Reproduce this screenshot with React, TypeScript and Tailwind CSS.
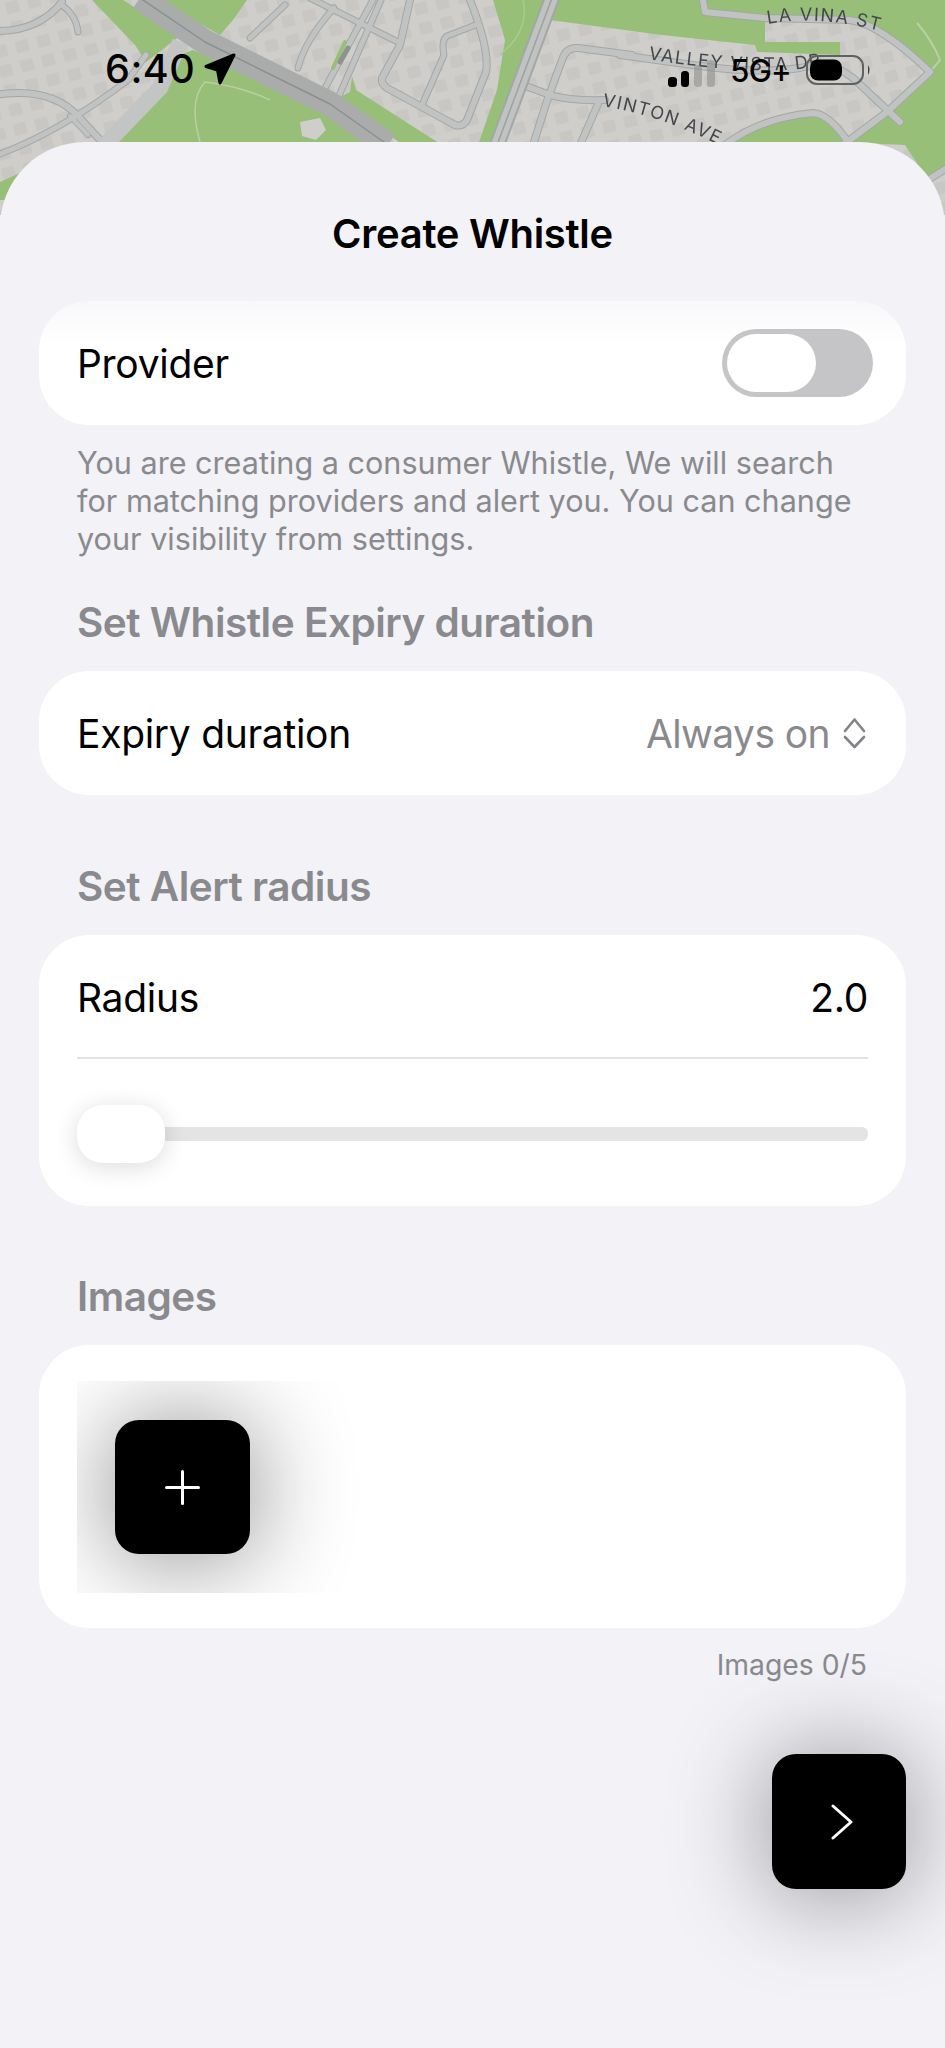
import React from "react";

const RES = "#cfcecb";
const GREEN = "#97bf77";

const streets: [string, number][] = [
  ["M-5 31 Q38 32 62 2", 6],
  ["M60 4 Q76 14 78 32", 5],
  ["M-5 95 Q50 86 78 116 L102 142", 6],
  ["M-5 156 Q60 132 128 80 L146 55", 5],
  ["M70 116 L88 135", 4],
  ["M250 38 L285 5", 5],
  ["M298 68 Q305 40 334 8", 5],
  ["M310 -2 L398 42", 5],
  ["M373 0 L325 88", 5],
  ["M381 0 L338 98", 5],
  ["M410 0 L400 45 L382 78 Q381 84 387 88 L455 125 Q463 127 467 120 L486 72 Q490 50 470 0", 6],
  ["M478 24 L447 36 Q441 40 444 55 L422 105", 5],
  ["M523 85 L550 95 Q570 101 605 100", 6],
  ["M632 55 L578 48 Q566 47 562 60 L548 98 L533 145", 6],
  ["M598 104 L580 145", 6],
  ["M620 55 L700 66 Q760 74 800 68 Q830 60 853 78 L900 122", 6],
  ["M703 0 L705 12 L765 18 L850 20 Q880 24 930 72 L887 112 L843 145", 6],
  ["M725 145 Q760 118 813 113 Q830 114 850 145", 6],
  ["M928 180 L950 166", 6],
];

function MapBackground() {
  return (
    <svg
      className="absolute left-0 top-0 blur-[0.7px]"
      width="945"
      height="215"
      viewBox="0 0 945 215"
    >
      <defs>
        <pattern id="lots" width="22" height="20" patternUnits="userSpaceOnUse" patternTransform="rotate(-14)">
          <rect x="4" y="4" width="13" height="12" rx="1.5" fill="#c8c7c4" />
        </pattern>
        <path id="lavina" d="M768 24 Q820 14 888 33" />
        <path id="valley" d="M648 59 Q720 72 790 70 Q815 68 838 62" />
        <path id="vinton" d="M602 106 Q665 116 728 150" />
      </defs>
      <rect width="945" height="215" fill={RES} />
      <rect width="945" height="215" fill="url(#lots)" />
      <g fill={GREEN}>
        <path d="M92 0 L123 0 L180 36 L146 62 L135 45 Z" />
        <path d="M157 0 L247 0 L233 20 L220 35 Z" />
        <path d="M193 50 L330 115 L372 145 L105 145 L160 95 L180 55 Z" />
        <path d="M338 98 L350 92 L352 76 L356 90 L442 145 L403 145 Z" />
        <path d="M493 0 L505 40 L497 90 L478 145 L500 145 L556 0 Z" />
        <path d="M555 0 L945 0 L945 168 L928 180 L905 145 L843 142 L887 112 L930 72 Q885 28 850 20 L765 20 L765 42 L840 42 L840 55 L757 52 L755 45 L662 35 L550 20 Z" />
        <path d="M728 145 Q765 118 813 113 Q832 116 848 145 Z" />
        <path d="M0 182 L22 172 L8 200 L0 200 Z" />
      </g>
      <path d="M917 23 Q932 40 940 60 L930 72" fill="none" stroke="#b9cfa5" strokeWidth="2" />
      <path d="M200 142 Q188 100 205 82 Q240 86 270 100" fill="none" stroke="#b9cfa5" strokeWidth="1.5" />
      <path d="M553 0 Q560 30 530 55" fill="none" stroke="#a9cb8e" strokeWidth="1.5" transform="translate(-30 0)" />
      <path d="M300 122 L320 118 L326 130 L316 140 L302 136 Z" fill={RES} />
      <g fill="none" strokeLinejoin="round" strokeLinecap="round">
        {streets.map(([d, w], i) => (
          <path key={`o${i}`} d={d} stroke="#a3a7a6" strokeWidth={w + 2} />
        ))}
        {streets.map(([d, w], i) => (
          <path key={`i${i}`} d={d} stroke="#c0c3c2" strokeWidth={w} />
        ))}
        <path d="M180 42 L160 88 L105 145" stroke="#c2c5c4" strokeWidth="16" strokeLinecap="butt" />
        <path d="M552 -2 L497 145" stroke="#a3a7a6" strokeWidth="16" strokeLinecap="butt" />
        <path d="M552 -2 L497 145" stroke="#c0c3c2" strokeWidth="12" strokeLinecap="butt" />
        <path d="M552 -2 L497 145" stroke="#9da1a0" strokeWidth="1.5" strokeLinecap="butt" />
        <path d="M140 -2 L205 42 L330 104 L388 145" stroke="#a9acab" strokeWidth="25" strokeLinecap="butt" />
        <path d="M140 -2 L205 42 L330 104 L388 145" stroke="#8b8f8f" strokeWidth="1.5" strokeLinecap="butt" />
        <path d="M333 68 L345 42" stroke={GREEN} strokeWidth="4" />
        <path d="M340 62 L348 48" stroke="#8f9291" strokeWidth="5" />
      </g>
      <g
        fill="#43474b"
        fontFamily="Inter, sans-serif"
        fontSize="18"
        style={{ letterSpacing: "1.5px" }}
      >
        <text>
          <textPath href="#lavina">LA VINA ST</textPath>
        </text>
        <text>
          <textPath href="#valley">VALLEY VISTA DR</textPath>
        </text>
        <text>
          <textPath href="#vinton">VINTON AVE</textPath>
        </text>
      </g>
    </svg>
  );
}

function StatusBar() {
  return (
    <div className="absolute left-0 top-[50px] flex h-10 w-full items-center justify-between pl-[105px] pr-[73px] font-[Inter,sans-serif] text-black">
      <div className="flex items-center gap-[8px]">
        <span className="text-[39.5px] font-medium leading-none tracking-[0.5px]">6:40</span>
        <svg width="34" height="33" viewBox="203 55 34 33" className="-mt-[2px]">
          <path d="M234 57 L206 68.5 L217.5 72 L220 85 Z" fill="#000" stroke="#000" strokeWidth="3" strokeLinejoin="round" />
        </svg>
      </div>
      <div className="flex items-center">
        <svg width="47" height="27" viewBox="0 0 47 27" className="mt-[7px]">
          <rect x="0" y="17" width="9" height="10" rx="3.5" fill="#000" />
          <rect x="13" y="11" width="8" height="16" rx="3.5" fill="#000" />
          <rect x="26" y="5" width="8" height="22" rx="3.5" fill="#8f8f8d" fillOpacity="0.6" />
          <rect x="39" y="0" width="8" height="27" rx="3.5" fill="#8f8f8d" fillOpacity="0.6" />
        </svg>
        <span className="ml-[15px] text-[31px] font-medium leading-none tracking-[-0.8px]">5G+</span>
        <svg width="66" height="32" viewBox="0 0 66 32" className="ml-[15px]">
          <rect x="1" y="2" width="56" height="28" rx="10" fill="none" stroke="#606261" strokeWidth="2" />
          <rect x="4" y="5.5" width="32" height="21" rx="8" fill="#000" />
          <path d="M62 11 Q65 16 62 21 Z" fill="#3f4141" />
        </svg>
      </div>
    </div>
  );
}

function SectionTitle({ children, className }: { children: React.ReactNode; className: string }) {
  return (
    <h2 className={`pl-[77px] text-[40.5px] font-semibold leading-[42px] tracking-[-0.5px] text-[#8a8a8e] ${className}`}>
      {children}
    </h2>
  );
}

export default function App() {
  return (
    <div className="relative h-[2048px] w-full overflow-hidden bg-[#f2f2f7] font-[Inter,sans-serif]">
      <MapBackground />
      <StatusBar />
      <main className="relative flex h-full flex-col pt-[142px]">
        <div className="flex h-full flex-col rounded-t-[85px] bg-[#f2f2f7]">
          <h1 className="mt-[71px] text-center text-[40px] font-semibold leading-[42px] tracking-[-0.3px] text-black">
            Create Whistle
          </h1>

          <section className="mx-[39px] mt-[46px] flex h-[124px] items-center justify-between rounded-[50px] bg-linear-to-b from-[#f8f8fb] to-white to-[35%] pl-[38px] pr-[33px]">
            <span className="pt-[2px] text-[39px] leading-[44px] tracking-[-0.3px] text-black">Provider</span>
            <div className="flex h-[68px] w-[151px] rounded-full bg-[#c5c5c7] p-[5px]">
              <div className="h-[58px] w-[89px] rounded-full bg-white" />
            </div>
          </section>

          <p className="mt-[19px] pl-[77px] pr-[83px] text-[30.6px] leading-[38px] text-[#8a8a8e]">
            You are creating a consumer Whistle, We will search for matching providers and alert you. You can change your visibility from settings.
          </p>

          <SectionTitle className="mt-[44px]">Set Whistle Expiry duration</SectionTitle>

          <section className="mx-[39px] mt-[27px] flex h-[124px] items-center justify-between rounded-[50px] bg-white pl-[38px] pr-[40px]">
            <span className="pt-[2px] text-[39px] leading-[44px] tracking-[-0.3px] text-black">Expiry duration</span>
            <div className="flex items-center gap-[13px]">
              <span className="pt-[2px] text-[39px] leading-[44px] tracking-[-0.6px] text-[#8a8a8e]">Always on</span>
              <svg width="23" height="32" viewBox="0 0 23 32" fill="none" stroke="#848488" strokeWidth="2.6" strokeLinecap="round" strokeLinejoin="round">
                <path d="M2 14 L11.5 2.5 L21 14" />
                <path d="M2 20 L11.5 30 L21 20" />
              </svg>
            </div>
          </section>

          <SectionTitle className="mt-[71px]">Set Alert radius</SectionTitle>

          <section className="mx-[39px] mt-[27px] rounded-[50px] bg-white px-[38px] pb-[43px] pt-[42px]">
            <div className="flex items-center justify-between">
              <span className="text-[39px] leading-[42px] tracking-[-0.3px] text-black">Radius</span>
              <span className="text-[39px] leading-[42px] tracking-[-0.3px] text-black">2.0</span>
            </div>
            <div className="mt-[38px] h-[2px] bg-[#e3e3e5]" />
            <div className="relative mt-[46px] flex h-[58px] items-center">
              <div className="h-[14px] w-full rounded-[6px] bg-[#e4e4e4]" />
              <div className="absolute left-0 top-0 h-[58px] w-[88px] rounded-[26px] bg-white shadow-[0_4px_24px_rgba(0,0,0,0.14)]" />
            </div>
          </section>

          <SectionTitle className="mt-[70px]">Images</SectionTitle>

          <section className="mx-[39px] mt-[27px] rounded-[50px] bg-white px-[38px] pb-[35px] pt-[36px]">
            <div className="h-[212px] overflow-hidden py-[39px] pl-[38px]">
              <button className="flex h-[134px] w-[135px] items-center justify-center rounded-[24px] bg-black shadow-[0_4px_100px_rgba(0,0,0,0.48)]">
                <svg width="35" height="35" viewBox="0 0 35 35" fill="none" stroke="#fff" strokeWidth="3" strokeLinecap="round">
                  <path d="M17.5 1.5 V33.5" />
                  <path d="M1.5 17.5 H33.5" />
                </svg>
              </button>
            </div>
          </section>

          <p className="mr-[78px] mt-[19px] text-right text-[28.3px] leading-[36px] text-[#8a8a8e]">Images 0/5</p>

          <button className="mr-[39px] mt-[71px] flex h-[135px] w-[134px] items-center justify-center self-end rounded-[24px] bg-black shadow-[0_4px_100px_rgba(0,0,0,0.42)]">
            <svg width="22" height="36" viewBox="0 0 22 36" fill="none" stroke="#fff" strokeWidth="3" strokeLinecap="round" strokeLinejoin="round" className="ml-[5px]">
              <path d="M2 2 L20 18 L2 34" />
            </svg>
          </button>
        </div>
      </main>
    </div>
  );
}
